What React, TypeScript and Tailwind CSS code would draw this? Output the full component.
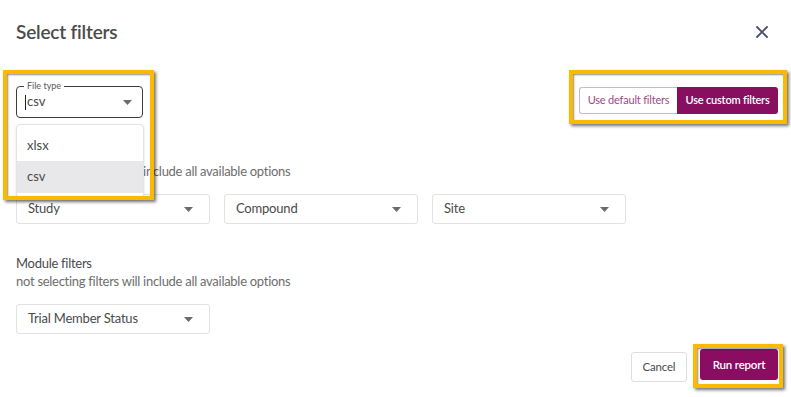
import React from "react";

const Caret = () => (
  <svg width="9" height="5" viewBox="0 0 9 5" className="shrink-0">
    <path d="M0 0h9L4.5 5z" fill="#6b6b6b" />
  </svg>
);

const SelectBox = ({ label }: { label: string }) => (
  <div className="flex h-[30px] w-[194px] items-center justify-between rounded-[3px] border border-[#e2e2e2] pl-[11px] pr-[16px] text-[13px] tracking-[-0.2px] text-[#4a4a4a]">
    <span>{label}</span>
    <Caret />
  </div>
);

const Highlight = ({ className }: { className: string }) => (
  <div
    className={`pointer-events-none absolute border-[4px] border-[#fbb900] shadow-[2px_2px_3px_rgba(0,0,0,0.55),inset_1px_1px_2px_rgba(0,0,0,0.45)] ${className}`}
  />
);

export default function App() {
  return (
    <div className="relative h-[397px] w-[791px] overflow-hidden bg-white pl-[16px] pr-[13px] font-['Lato',sans-serif]">
      {/* Header */}
      <div className="flex h-[64px] items-center justify-between">
        <h2 className="text-[19px] font-semibold tracking-[-0.2px] text-[#4b4b4b]">Select filters</h2>
        <svg width="12" height="12" viewBox="0 0 12 12" className="mr-[10px]">
          <path d="M1 1l10 10M11 1L1 11" stroke="#4a4f6b" strokeWidth="1.8" strokeLinecap="round" />
        </svg>
      </div>

      {/* File type + filter toggle */}
      <div className="mt-[18px] flex items-start justify-between">
        <div className="relative mt-[4px] h-[32px] w-[127px] rounded-[4px] border border-[#3d3d3d]">
          <span className="absolute -top-[7px] left-[7px] bg-white px-[3px] text-[9px] leading-[12px] text-[#5a5a5a]">
            File type
          </span>
          <div className="flex h-full items-center justify-between pl-[8px] pr-[10px] text-[13px] text-[#4a4a4a]">
            <span className="flex items-center">
              <span className="mr-[1px] h-[15px] w-px bg-[#222]" />
              csv
            </span>
            <Caret />
          </div>
        </div>
        <div className="mt-[5px] flex h-[27px] text-[11px] tracking-[-0.2px]">
          <button className="w-[98px] rounded-l-[3px] border border-r-0 border-[#d9b3cb] text-[#a3478a]">
            Use default filters
          </button>
          <button className="w-[101px] rounded-r-[3px] bg-[#880e5f] font-semibold text-white">
            Use custom filters
          </button>
        </div>
      </div>

      {/* Study filters (label hidden behind the open menu) */}
      <div className="mt-[26px] text-[13px] leading-[18px] tracking-[-0.28px]">
        <div className="h-[18px]" />
        <p className="text-[#6e6e6e]">not selecting filters will include all available options</p>
      </div>
      <div className="mt-[14px] flex gap-[14px]">
        <SelectBox label="Study" />
        <SelectBox label="Compound" />
        <SelectBox label="Site" />
      </div>

      {/* Module filters */}
      <div className="mt-[30px] text-[13px] leading-[18px] tracking-[-0.28px]">
        <p className="text-[#4a4a4a]">Module filters</p>
        <p className="text-[#6e6e6e]">not selecting filters will include all available options</p>
      </div>
      <div className="mt-[14px]">
        <SelectBox label="Trial Member Status" />
      </div>

      {/* Footer */}
      <div className="mt-[15px] flex justify-end gap-[13px] text-[11.5px] tracking-[-0.2px]">
        <button className="mt-[3px] h-[30px] w-[56px] rounded-[3px] border border-[#dedede] text-[#4a4a4a]">
          Cancel
        </button>
        <button className="h-[31px] w-[78px] rounded-[3px] bg-[#8a0d62] font-semibold text-white">
          Run report
        </button>
      </div>

      {/* Open file type menu */}
      <div className="absolute left-[16px] top-[124px] w-[128px] rounded-[4px] border border-[#e4e4e4] bg-white py-[5px] text-[13px] text-[#4a4a4a] shadow-[0_1px_3px_rgba(0,0,0,0.12)]">
        <div className="flex h-[31px] items-center pl-[10px]">xlsx</div>
        <div className="flex h-[32px] items-center bg-[#e8e8eb] pl-[10px]">csv</div>
      </div>

      {/* Annotation highlights */}
      <Highlight className="left-[3px] top-[70px] h-[130px] w-[151px]" />
      <Highlight className="left-[569px] top-[70px] h-[54px] w-[218px]" />
      <Highlight className="left-[693px] top-[344px] h-[44px] w-[90px]" />
    </div>
  );
}
